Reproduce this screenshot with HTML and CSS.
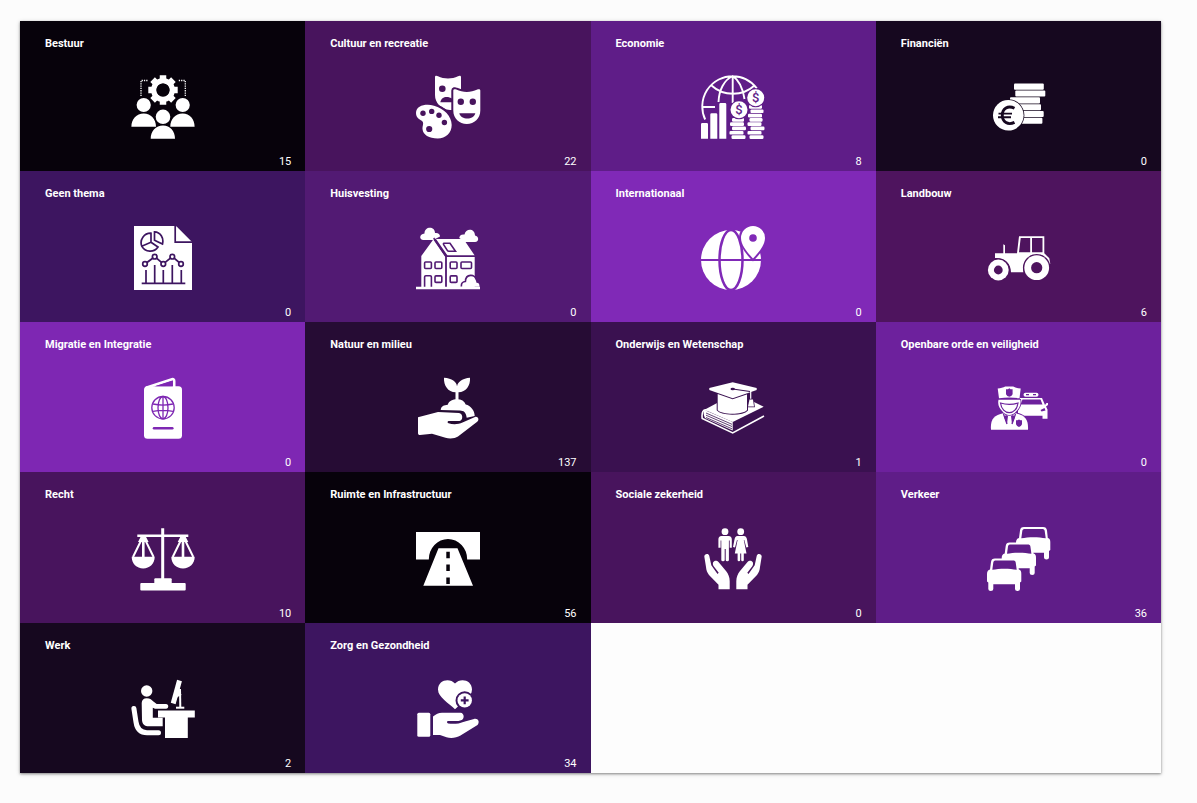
FILE: index.html
```html
<!DOCTYPE html>
<html lang="nl">
<head>
<meta charset="utf-8">
<meta name="viewport" content="width=device-width, initial-scale=1">
<title>Thema's</title>
<link rel="stylesheet" href="styles.css">
</head>
<body>
<main class="themes">
<a class="tile ink" href="#bestuur">
<span class="title">Bestuur</span>
<svg class="icon" viewBox="0 0 64 64" aria-hidden="true">
<path class="line" stroke-width="1.3" stroke-dasharray="1.3 1" d="M10 21V5.500h7M54.300 21V5.500h-7"/>
<circle cx="32" cy="15" r="9.200" fill="none" stroke="currentColor" stroke-width="5.500"/>
<path class="line" stroke-width="6.500" stroke-linejoin="round" d="M32 .3v5M32 24.700v5M17.300 15h5M41.700 15h5M21.600 4.600l3.500 3.500M38.900 21.900l3.500 3.500M42.400 4.600l-3.500 3.500M25.100 21.900l-3.500 3.500"/>
<circle cx="32" cy="15" r="6.600" class="cut"/>
<circle cx="12.700" cy="30" r="7.100"/><circle cx="51.700" cy="30" r="7.100"/><circle cx="32" cy="41.800" r="7.300"/>
<path d="M.4 51.700C.4 44 5.500 38.400 12.700 38.400S25 44 25 51.700zM39.300 51.700c0-7.700 5.100-13.300 12.300-13.300s12 5.600 12 13.300zM19.700 63.700c0-7.700 5.100-13.300 12.300-13.300s12 5.600 12 13.300z"/>
</svg>
<span class="count">15</span>
</a>
<a class="tile plum" href="#cultuur">
<span class="title">Cultuur en recreatie</span>
<svg class="icon" viewBox="0 0 64 64" aria-hidden="true">
<path d="M19 2c0-1.300 1.500-1.600 3-.7 6 3 14 3 20 0 1.500-.9 3-.6 3 .7V35H34C25 34 19 28 19 20z"/>
<circle cx="26.300" cy="13.700" r="3.300" class="cut"/><path class="cut" d="M24.300 27.300c1-6 7.500-6.500 12-3.500v3.500z"/>
<path d="M37.300 15.500c0-1.300 1.500-1.800 3-.9 6.500 3.200 14.500 3.200 21 0 1.500-.9 3-.4 3 .9v20c0 8-6 13.500-13.500 13.500s-13.500-5.500-13.500-13.500z" class="edge" stroke-width="4"/>
<circle cx="44.800" cy="26.700" r="3.200" class="cut"/><circle cx="56.800" cy="26.700" r="3.200" class="cut"/><path class="cut" d="M43.300 38.300h16c-1.500 7-14.500 7-16 0z"/>
<path class="edge" stroke-width="4" d="M0 38c0-7.500 10-9.500 18-7.300C28 33.500 35.700 41 35.700 50c0 8-6 13.400-14 13.400C13 63.400 7 60 6.500 54c-.2-3 1.500-5.500 0-7.500C5 44.500 0 44 0 38z"/>
<g class="cut"><circle cx="7" cy="38.300" r="2.700"/><circle cx="15.700" cy="36.400" r="2.700"/><circle cx="23" cy="40.300" r="2.700"/><circle cx="28.400" cy="47.500" r="2.700"/><circle cx="13.200" cy="54" r="3.100"/></g>
</svg>
<span class="count">22</span>
</a>
<a class="tile violet" href="#economie">
<span class="title">Economie</span>
<svg class="icon" viewBox="0 0 64 64" aria-hidden="true">
<path class="line" stroke-width="1.900" d="M4.200 44.500A30.300 30.300 0 0 1 31.500 1.200 30.300 30.300 0 0 1 55.800 13.400M31.700 1v27M1 32h13M17.500 27C18 15 23 5 31.700 1c6 4 10 11 11.800 23M10.500 10.500c12 11 31 11 43 0"/>
<path d="M0 49.300q0-1.300 1.300-1.300h4.400Q7 48 7 49.300v14.400H0zM9.300 39.600q0-1.300 1.300-1.300h4.400q1.300 0 1.300 1.300v24.100h-7zM18.300 29.300q0-1.300 1.300-1.300H24q1.300 0 1.300 1.300v34.400h-7z"/>
<g><rect x="31" y="43" width="12" height="3.700" rx="1.200"/><rect x="29" y="47.300" width="14" height="3.700" rx="1.200"/><rect x="31" y="51.600" width="14" height="3.700" rx="1.200"/><rect x="28.500" y="55.900" width="14" height="3.700" rx="1.200"/><rect x="30.500" y="60.200" width="14" height="3.700" rx="1.200"/></g>
<g><rect x="48" y="30.100" width="13" height="3.700" rx="1.200"/><rect x="49.500" y="34.400" width="13" height="3.700" rx="1.200"/><rect x="47" y="38.700" width="14" height="3.700" rx="1.200"/><rect x="48.500" y="43" width="13" height="3.700" rx="1.200"/><rect x="46.500" y="47.300" width="14" height="3.700" rx="1.200"/><rect x="49.500" y="51.600" width="14" height="3.700" rx="1.200"/><rect x="46.500" y="55.900" width="14" height="3.700" rx="1.200"/><rect x="48.500" y="60.200" width="14" height="3.700" rx="1.200"/></g>
<circle cx="38" cy="34.700" r="8.500" class="edge" stroke-width="2"/><circle cx="54.700" cy="22.800" r="8.500" class="edge" stroke-width="2"/>
<text class="sign" x="38" y="39.200" font-size="13">$</text><text class="sign" x="54.700" y="27.300" font-size="13">$</text>
</svg>
<span class="count">8</span>
</a>
<a class="tile night" href="#financien">
<span class="title">Financiën</span>
<svg class="icon" viewBox="0 0 64 64" aria-hidden="true">
<rect x="28" y="8.500" width="29.800" height="6.300" rx="1"/><rect x="29.300" y="15.500" width="30" height="6.100" rx="1"/><rect x="24" y="22.300" width="30" height="6.100" rx="1"/><rect x="30" y="29.200" width="25" height="6.100" rx="1"/><rect x="36" y="36" width="21.700" height="6.100" rx="1"/><rect x="34" y="42.700" width="22.400" height="6.100" rx="1"/>
<circle cx="22.300" cy="40.300" r="15.300" class="edge" stroke-width="1.600"/>
<path class="carve" stroke-width="2.900" d="M28.500 33.300C22 30 16.300 33.500 16.300 40.300S22 50.500 28.500 47.400"/><path class="carve" stroke-width="1.900" d="M12.500 38.600h13.500M12 42.300h13"/>
</svg>
<span class="count">0</span>
</a>
<a class="tile indigo" href="#geen-thema">
<span class="title">Geen thema</span>
<svg class="icon" viewBox="0 0 64 64" aria-hidden="true">
<path d="M3 0h58v64H3z"/><path class="cut" d="M45 0h16v16z"/><path d="M45.500.7v14.800H60z"/>
<path class="carve" stroke-width="1.700" d="M44.200 0v16.200H61M20 7.200a9.500 9.500 0 0 0-9.200 13l9.200-4zM10.800 20.200A9.500 9.500 0 0 0 27 21l-7-4.800M23.500 5.800c6 .3 9.500 6 8 12.200l-8-3.700zM15 44v13.300M23.700 39v18.300M32.300 44v13.300M41.300 39v18.300M50.300 44v13.300M10.700 57.300h43.600M14 38l9.700-7.300L32.300 38l9-7.300L50 38"/>
<g fill="currentColor" class="rim" stroke-width="1.700"><circle cx="14" cy="38" r="2.300"/><circle cx="23.700" cy="30.700" r="2.300"/><circle cx="32.300" cy="38" r="2.300"/><circle cx="41.300" cy="30.700" r="2.300"/><circle cx="50" cy="38" r="2.300"/></g>
</svg>
<span class="count">0</span>
</a>
<a class="tile grape" href="#huisvesting">
<span class="title">Huisvesting</span>
<svg class="icon" viewBox="0 0 64 64" aria-hidden="true">
<path d="M7.500 14C3 14 3 8 8.500 7.500 8.500 0 19 0 19 7c3-.5 5 1 5 3.500L17 14zM59 16c4.500 0 4-6 0-6.500 0-7.500-9.500-7.500-10.500-1C45 8 43.300 10 43.300 12L49 16z"/>
<path d="M17.300 13.500L29.300 31v30H5.300V30zM20 13h27.500l11.200 16.500H31.500zM30.700 31h28v30h-28z"/>
<path class="carve" stroke-width="1.400" d="M17.700 12L30 30.300h29M30 30v31"/>
<path d="M0 60.700h64v2.600H0z"/>
<g class="carve" stroke-width="1.600"><rect x="8.600" y="36" width="6.800" height="6.500" rx="1"/><rect x="19" y="36" width="6.800" height="6.500" rx="1"/><rect x="19" y="49.900" width="6.800" height="6.500" rx="1"/><rect x="34.200" y="36" width="6.800" height="6.500" rx="1"/><rect x="34.200" y="49.900" width="6.800" height="6.500" rx="1"/><rect x="45" y="36" width="10.500" height="6.500" rx="1"/><path d="M8.600 60.700V51q0-1.200 1.200-1.200h4.400q1.200 0 1.200 1.200v9.700M28 17.200h6l5.500 8h-6.700q-1 0-1.500-.8l-3.500-5.500q-.8-1.700.2-1.700zM45.500 60.500c-.5-3 1-5 4-5 0-8 10-8 11-1"/></g>
<path d="M47 60.700c-.5-3 1-4 3.500-4 .5-7.500 9-8 10 0 2.500 0 3 1.500 3 4z"/>
</svg>
<span class="count">0</span>
</a>
<a class="tile orchid" href="#internationaal">
<span class="title">Internationaal</span>
<svg class="icon" viewBox="0 0 64 64" aria-hidden="true">
<circle cx="30" cy="34" r="30"/><ellipse cx="30" cy="34" rx="11.500" ry="30" class="carve" stroke-width="2.500"/><path class="carve" stroke-width="1.800" d="M0 34h60"/>
<path class="edge" stroke-width="4" d="M52 32.500C48 28 40 20 40 12a12 12 0 0 1 24 0c0 8-8 16-12 20.500z"/><circle cx="52" cy="12" r="3.800" class="cut"/>
</svg>
<span class="count">0</span>
</a>
<a class="tile wine" href="#landbouw">
<span class="title">Landbouw</span>
<svg class="icon" viewBox="0 0 64 64" aria-hidden="true">
<path d="M33 10.300h25.300v17l5 5 1 5.500-1 .2C60 30 47 26 40 35c-3 4-3 7-2.500 11.300H25C25 37 18 31 9 32v-4.700h22zM17.300 18.300l1.700 1v8.300h-1.700z"/>
<path class="cut" d="M34.700 12h9.500v14.200H33zM46 12h10.500v14.200H46z"/>
<circle cx="50.700" cy="41.700" r="12.400" class="edge" stroke-width="2.800"/><circle cx="12.300" cy="44" r="10.400" class="edge" stroke-width="2.400"/><circle cx="50.700" cy="41.700" r="5.600" class="cut"/><circle cx="12.300" cy="44" r="4.400" class="cut"/>
</svg>
<span class="count">6</span>
</a>
<a class="tile lilac" href="#migratie">
<span class="title">Migratie en Integratie</span>
<svg class="icon" viewBox="0 0 64 64" aria-hidden="true">
<path class="line" stroke-width="2.600" d="M15 11.700L41 3.200q2.200-.5 2.200 1.800V12"/><rect x="13" y="10.200" width="38" height="52.500" rx="3.500"/><path class="cut" d="M24 10.200l17.700-5.500v5.500z"/>
<g class="carve" stroke-width="1.300"><circle cx="32" cy="31.700" r="11.200"/><ellipse cx="32" cy="31.700" rx="5" ry="11.200"/><path d="M32 20.500v22.400M22 28c6 1.300 14 1.300 20 0M22 35.400c6-1.300 14-1.300 20 0"/><path stroke-width="2.500" stroke-linecap="round" d="M23 52.300h18.300"/></g>
</svg>
<span class="count">0</span>
</a>
<a class="tile aubergine" href="#natuur">
<span class="title">Natuur en milieu</span>
<svg class="icon" viewBox="0 0 64 64" aria-hidden="true">
<path d="M28 1.700c8 .5 12.500 4 13 8.500 1-4.500 5.500-8 13-8.500.5 8-4 14.500-11.500 14.500V24h-3v-7.800C32 16 27.500 9.500 28 1.700z"/>
<path d="M24.700 34c.3-4 3.500-5 7-5.300 1.500-4 5-5.400 9.300-5.400s7.500 1.700 8.700 5.200c5 1.200 9 6 9 11.500l-8 1.700C50 36 47.500 34.700 44 34.500z"/>
<path d="M2 41.300l20-5.300 21 1c4 .5 4.500 7 .5 8H32.500c-.8 0-1.500 1.700 0 2.200 4.500 1.500 10 1.200 14-.7L59 41c3-1 4.700 3 2.200 4.700L42 60.500c-3 2-8.500 2.500-12.500 1.200L16 57.800 4 59c-1.300 0-2-.5-2-2z"/>
</svg>
<span class="count">137</span>
</a>
<a class="tile mauve" href="#onderwijs">
<span class="title">Onderwijs en Wetenschap</span>
<svg class="icon" viewBox="0 0 64 64" aria-hidden="true">
<path d="M18 26L3.500 33.800 31.700 46l31-15.300L53 26z"/>
<path d="M3.500 34L31.700 46v8.500L4 42c-1.500-3-2-6-.5-8z"/>
<path class="carve" stroke-width=".8" d="M5 37l26 11.300M5 39.200l26 11.300M5 41.500l26 11.300"/>
<path class="line" stroke-width="1.600" d="M6 34C2 33 .5 36.500 1.200 42.500L31.700 56.900 63 40"/>
<path class="edge" stroke-width="2" d="M16.700 18v16c4 5 25 5 29.300 0V18z"/>
<path class="edge" stroke-width="2" d="M31.700 6.300L55.700 12v2L31.700 22.300 8.300 14v-2z"/>
<path class="carve" stroke-width="1.200" d="M31.700 13L49 15.500"/><ellipse cx="31.700" cy="13" rx="2.200" ry="1.200" class="cut"/>
<path class="line" stroke-width="1.200" d="M49.700 15v8"/><path class="edge" stroke-width="1.600" d="M48.500 23.500H52l1 7h-6z"/>
</svg>
<span class="count">1</span>
</a>
<a class="tile purple" href="#openbare-orde">
<span class="title">Openbare orde en veiligheid</span>
<svg class="icon" viewBox="0 0 64 64" aria-hidden="true">
<rect x="37.500" y="16.700" width="15" height="4" rx="2"/><path class="carve" stroke-width="1.300" d="M40 18.700h3M47 18.700h3"/>
<path d="M34 22h22l3 7 1.500-2h1.500v2l-2 1.500 1.500 3v9.300h-5v-3H32V31z"/><path class="cut" d="M36.500 23.600h18l2 5H34.500zM58.500 32l-4 2 1 1.500 4-1z"/>
<path class="edge" stroke-width="1.600" d="M5 53.700C4.200 44 7.500 39 17.500 37.300h12C39.500 39 42.500 44 42 53.700z"/>
<path class="edge" stroke-width="1.600" d="M12.500 23.700h21.800c1.200 5.500-1.500 9-4 11.500-4 5-10 5-14 0-2.500-2.500-5-6-3.800-11.500z"/><path class="carve" stroke-width="1.200" d="M14.500 27c5.500 1.700 12 1.700 17.500 0-.8 6.200-4.500 9.700-8.700 9.700S15.300 33.200 14.500 27z"/>
<path d="M11.700 12.500c3-.2 5.500-.7 7.500-1.900h8c2 1.200 4.500 1.700 7.500 1.900L33.500 22.300c-7-1-13.500-1-20.500 0z"/><path class="cut" d="M23.300 12.200l1.300 1h2v5q-1 2-3.300 2.500-2.300-.5-3.300-2.500v-5h2z"/>
<path class="carve" stroke-width="1.300" d="M17.500 38l3.500 10M29.500 38L26 48"/><path class="cut" d="M20 39l2 1-1 8-3-7zM27 39l-2 1 1 8 3-7z"/><path class="cut" d="M33 43.500l1.500.7h1.500v4q-.8 2-3 2.700-2.200-.7-3-2.700v-4h1.500z"/>
</svg>
<span class="count">0</span>
</a>
<a class="tile plum" href="#recht">
<span class="title">Recht</span>
<svg class="icon" viewBox="0 0 64 64" aria-hidden="true">
<path d="M6.300 7.500h51v2.600h-51zM30.200 1.300h3v52h-3z"/><rect x="23.300" y="51.300" width="17.400" height="7" rx="1"/><rect x="9.300" y="55.900" width="45.400" height="7.500" rx="1"/>
<path class="line" stroke-width="2" d="M12.300 9L2 30M12.300 9L22.600 30M52 9L41.700 30M52 9l10.300 21"/><path class="line" stroke-width="2.600" d="M12.300 9v21M52 9v21"/>
<path d="M.7 29.700h23c0 7-5 11.700-11.500 11.700S.7 36.700.7 29.700zM40.300 29.700h23.400c0 7-5 11.700-11.700 11.700s-11.700-4.700-11.700-11.700zM10 9h4.600l3 6H7zM49.700 9h4.600l3 6H46.700z"/>
</svg>
<span class="count">10</span>
</a>
<a class="tile ink" href="#ruimte">
<span class="title">Ruimte en Infrastructuur</span>
<svg class="icon" viewBox="0 0 64 64" aria-hidden="true">
<path d="M0 5h64v27.400H51.200a19.200 20.500 0 0 0-38.400 0H0zM22.500 21.300h19L57 58.800H7.300z"/><path class="cut" d="M30.300 24.700h3.500v6.500h-3.500zM30.300 37.600h3.500v6.500h-3.500zM30.300 50.500h3.500V57h-3.500z"/>
</svg>
<span class="count">56</span>
</a>
<a class="tile plum" href="#sociale-zekerheid">
<span class="title">Sociale zekerheid</span>
<svg class="icon" viewBox="0 0 64 64" aria-hidden="true">
<circle cx="24" cy="4.700" r="3.400"/><circle cx="39.700" cy="4.700" r="3.400"/>
<path d="M20.500 9h7c2.300 0 3.300 1.500 3.300 3.500v8.300h-2.100v-7.300h-.8V33q0 1.300-1.600 1.300T24.700 33V22h-1v11q0 1.300-1.700 1.300T20.300 33V13.500h-.7v7.300h-2.200v-8.300c0-2 1-3.500 3.100-3.500z"/>
<path d="M36.500 9h6.300c2 0 2.800 1.500 3.200 3.500l1.300 7.500-2 .5-2-7.500h-.5l2.700 13.500h-2.700V33q0 1.300-1.300 1.300T40.200 33v-6.500h-1V33q0 1.300-1.300 1.300T36.600 33v-6.500h-2.800L36.600 13H36l-2 7.500-2-.5 1.500-7.500C34 10.500 34.700 9 36.500 9z"/>
<g id="palm"><path d="M3.300 29.500c0-3 4.300-3.600 5-.6l2 9.300L16.500 47l1.200-1.200-5-6.500c-2.700-4.500 2-7.500 5-4l7.500 9c2 2.500 3.500 6 3.500 10v8H17.500v-4.500L8 48c-2-2.500-2.700-5-3-8z"/></g>
<use href="#palm" transform="matrix(-1 0 0 1 64 0)"/>
</svg>
<span class="count">0</span>
</a>
<a class="tile violet" href="#verkeer">
<span class="title">Verkeer</span>
<svg class="icon" viewBox="0 0 64 64" aria-hidden="true">
<defs><g id="car"><path d="M5 35c.3-2.500 1.500-3.500 4-3.500h19c2.500 0 3.700 1 4 3.500l.8 7.500c2 .5 2.500 2 2.500 4.500v7.500l-1.300 1v6.500q0 2-2.500 2t-2.500-2v-4.800H7.300V62q0 2-2.500 2t-2.500-2v-6.500L1 54.500V47c0-2.500 1-4 3-4.500z"/><path class="cut" d="M7.300 35.500C7.500 34 8.500 33.500 10 33.500h17c1.500 0 2.500.5 2.700 2l1 7.300c-7-1.500-17.400-1.500-24.400 0z"/></g></defs>
<use href="#car" x="29" y="-31.500"/><use href="#car" x="14.700" y="-16"/><use href="#car"/>
</svg>
<span class="count">36</span>
</a>
<a class="tile night" href="#werk">
<span class="title">Werk</span>
<svg class="icon" viewBox="0 0 64 64" aria-hidden="true">
<circle cx="15.700" cy="14" r="5.700"/>
<path d="M10.700 26c0-3 2-4.700 5-4.700 3.500 0 5 1.700 7 3.500l3 2.200H35c3 0 3 4.500 0 4.700H24l-2.200-1v10h9.900v8.600H18c-4.500 0-6.500-2-7-6z"/>
<path class="line" stroke-width="5" stroke-linecap="round" stroke-linejoin="round" d="M2.900 31.500L5 45c1 7 4 10.700 11 10.700h11.500"/>
<path d="M27 33.400h36.800v7.100h-7v20.600H34V40.500h-7z"/>
<path class="line" stroke-width="5" d="M48.500 3.500L42.200 26.500"/><path class="line" stroke-width="2" d="M49 12l.3 18.500"/><path d="M47 9l3.500 9-4 2-2.500 6z"/><path d="M45 29.700h8.300v2H45z"/>
</svg>
<span class="count">2</span>
</a>
<a class="tile indigo" href="#zorg">
<span class="title">Zorg en Gezondheid</span>
<svg class="icon" viewBox="0 0 64 64" aria-hidden="true">
<path d="M39 6.500C44 .5 56 2.500 56 12.500c0 8.500-11 13.500-17 19.800C33 26 22 20.500 22 12.500 22 2.500 34 .5 39 6.500z"/>
<circle cx="48.700" cy="23.400" r="7.200" class="edge" stroke-width="4"/><path class="carve" stroke-width="2.200" d="M48.700 19.500v7.800M44.800 23.400h7.800"/>
<rect x="1.300" y="35.700" width="13" height="24" rx="1.500"/>
<path d="M17 39.500c3-2.500 5.500-3.800 9-3.800h18.500c4 .3 4.300 6.500.5 7.500l-2.500.7H32c-1.300 0-1.300 2.300.2 2.500 5 1 11 .3 15-1.500L58 42c4-1 6.200 3 3.500 6L44.500 58.500c-4 2.500-10 3.200-14 1.700L24 58h-7z"/>
</svg>
<span class="count">34</span>
</a>
</main>
</body>
</html>
```
FILE: styles.css
```css
* {
  box-sizing: border-box;
}

body {
  margin: 0;
  padding: 21px 36px 30px 20px;
  background: #fcfcfc;
  font-family: Roboto, "Liberation Sans", sans-serif;
  font-size: 11px;
  line-height: 16px;
}

.themes {
  display: grid;
  grid-template-columns: repeat(4, 1fr);
  grid-auto-rows: 1fr;
  min-height: calc(100vh - 51px);
  background: #fdfdfd;
  box-shadow: 0 1px 4px rgba(0, 0, 0, 0.25), 0 1px 2px rgba(0, 0, 0, 0.3);
}

.tile {
  display: flex;
  flex-direction: column;
  min-height: 150px;
  padding: 15px 14px 1px 25px;
  background: var(--tile);
  color: #fff;
  text-decoration: none;
}

.title {
  font-weight: 700;
}

.icon {
  width: 64px;
  height: 64px;
  margin: auto 11px 15px 0;
  align-self: center;
  fill: currentColor;
  overflow: visible;
}

.count {
  align-self: flex-end;
}

.line {
  fill: none;
  stroke: currentColor;
}

.cut {
  fill: var(--tile);
}

.carve {
  fill: none;
  stroke: var(--tile);
}

.rim {
  stroke: var(--tile);
}

.edge {
  stroke: var(--tile);
  paint-order: stroke;
}

.sign {
  fill: var(--tile);
  font-weight: 500;
  text-anchor: middle;
}

.ink { --tile: #07020b; }
.plum { --tile: #48145d; }
.violet { --tile: #5f1d88; }
.night { --tile: #16081f; }
.indigo { --tile: #3d1560; }
.grape { --tile: #521a73; }
.orchid { --tile: #8029b7; }
.wine { --tile: #4e145e; }
.lilac { --tile: #7e27b3; }
.aubergine { --tile: #260c34; }
.mauve { --tile: #3a1150; }
.purple { --tile: #6d219d; }
```
